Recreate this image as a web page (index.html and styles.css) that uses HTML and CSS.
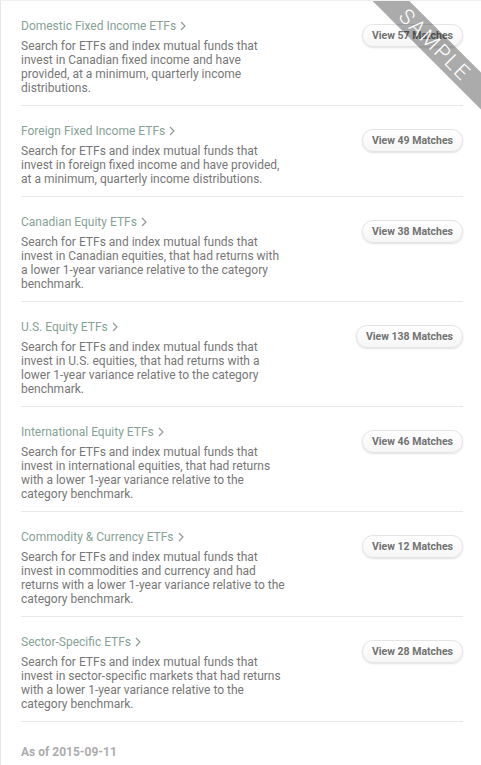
FILE: index.html
```html
<!DOCTYPE html>
<html>
<head>
<meta charset="utf-8">
<link rel="stylesheet" href="styles.css">
</head>
<body>
<div class="page">
  <div class="list">
    <div class="row">
      <div class="info">
        <div class="title">Domestic Fixed Income ETFs <svg class="chev" viewBox="0 0 6 10" width="6" height="10"><polyline points="1,1 5,5 1,9"/></svg></div>
        <div class="desc">Search for ETFs and index mutual funds that invest in Canadian fixed income and have provided, at a minimum, quarterly income distributions.</div>
      </div>
      <button class="btn">View 57 Matches</button>
    </div>
    <div class="row">
      <div class="info">
        <div class="title">Foreign Fixed Income ETFs <svg class="chev" viewBox="0 0 6 10" width="6" height="10"><polyline points="1,1 5,5 1,9"/></svg></div>
        <div class="desc">Search for ETFs and index mutual funds that invest in foreign fixed income and have provided, at a minimum, quarterly income distributions.</div>
      </div>
      <button class="btn">View 49 Matches</button>
    </div>
    <div class="row">
      <div class="info">
        <div class="title">Canadian Equity ETFs <svg class="chev" viewBox="0 0 6 10" width="6" height="10"><polyline points="1,1 5,5 1,9"/></svg></div>
        <div class="desc">Search for ETFs and index mutual funds that invest in Canadian equities, that had returns with a lower 1-year variance relative to the category benchmark.</div>
      </div>
      <button class="btn">View 38 Matches</button>
    </div>
    <div class="row">
      <div class="info">
        <div class="title">U.S. Equity ETFs <svg class="chev" viewBox="0 0 6 10" width="6" height="10"><polyline points="1,1 5,5 1,9"/></svg></div>
        <div class="desc">Search for ETFs and index mutual funds that invest in U.S. equities, that had returns with a lower 1-year variance relative to the category benchmark.</div>
      </div>
      <button class="btn">View 138 Matches</button>
    </div>
    <div class="row">
      <div class="info">
        <div class="title">International Equity ETFs <svg class="chev" viewBox="0 0 6 10" width="6" height="10"><polyline points="1,1 5,5 1,9"/></svg></div>
        <div class="desc">Search for ETFs and index mutual funds that invest in international equities, that had returns with a lower 1-year variance relative to the category benchmark.</div>
      </div>
      <button class="btn">View 46 Matches</button>
    </div>
    <div class="row">
      <div class="info">
        <div class="title">Commodity &amp; Currency ETFs <svg class="chev" viewBox="0 0 6 10" width="6" height="10"><polyline points="1,1 5,5 1,9"/></svg></div>
        <div class="desc">Search for ETFs and index mutual funds that invest in commodities and currency and had returns with a lower 1-year variance relative to the category benchmark.</div>
      </div>
      <button class="btn">View 12 Matches</button>
    </div>
    <div class="row">
      <div class="info">
        <div class="title">Sector-Specific ETFs <svg class="chev" viewBox="0 0 6 10" width="6" height="10"><polyline points="1,1 5,5 1,9"/></svg></div>
        <div class="desc">Search for ETFs and index mutual funds that invest in sector-specific markets that had returns with a lower 1-year variance relative to the category benchmark.</div>
      </div>
      <button class="btn">View 28 Matches</button>
    </div>
  </div>
  <div class="asof">As of 2015-09-11</div>
  <div class="ribbon">SAMPLE</div>
</div>
</body>
</html>
```

FILE: styles.css
```css
html, body {
  margin: 0;
  padding: 0;
  background: #fff;
  overflow: hidden;
}
body {
  font-family: Roboto, "Liberation Sans", sans-serif;
}
.page {
  position: relative;
  overflow: hidden;
  height: 765px;
  box-sizing: border-box;
  border-left: 1px solid #e6e6e6;
  border-top: 1px solid #f0f0f0;
  padding: 0 18px 0 20px;
}
.row {
  display: flex;
  justify-content: space-between;
  align-items: flex-start;
  padding: 16px 0 10px;
  border-bottom: 1px solid #e8e8e8;
}
.info {
  width: 266px;
}
.title {
  font-size: 12px;
  line-height: 18px;
  color: #86a295;
}
.chev {
  fill: none;
  stroke: #8f9c96;
  stroke-width: 1.2;
  vertical-align: -1px;
  margin-left: 1px;
}
.desc {
  margin-top: 4px;
  font-size: 12px;
  line-height: 14px;
  color: #777;
}
.btn {
  margin-top: 7px;
  font-family: Roboto, "Liberation Sans", sans-serif;
  font-size: 10.5px;
  font-weight: bold;
  line-height: 13px;
  color: #727272;
  padding: 4px 9px;
  border: 1px solid #e4e4e4;
  border-radius: 11px;
  background: linear-gradient(#ffffff, #f6f6f6);
  box-shadow: 0 1px 2px rgba(0,0,0,0.12);
  white-space: nowrap;
}
.asof {
  padding-top: 23px;
  font-size: 12px;
  line-height: 14px;
  font-weight: bold;
  color: #acacac;
}
.ribbon {
  position: absolute;
  left: 334px;
  top: 31px;
  width: 200px;
  height: 26px;
  line-height: 26px;
  text-align: center;
  transform: rotate(45deg);
  background: rgba(0,0,0,0.33);
  color: #fff;
  font-size: 21px;
  font-weight: 300;
  letter-spacing: 2px;
}
```
